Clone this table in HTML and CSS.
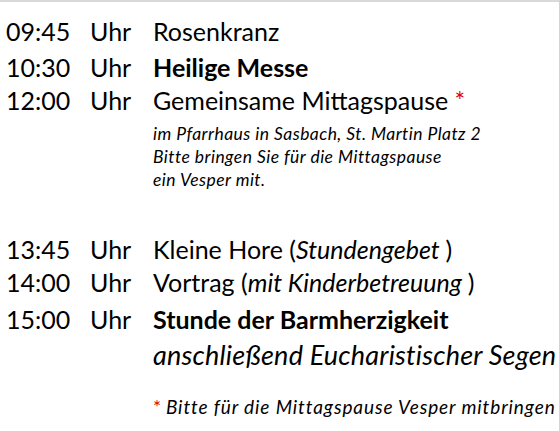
FILE: index.html
```html
<!DOCTYPE html>
<html lang="de">
<head>
<meta charset="utf-8">
<title>Programm</title>
<link rel="stylesheet" href="styles.css">
</head>
<body>
<main class="sched">
  <div class="row r1"><span class="time">09:45</span><span class="uhr">Uhr</span><span class="what">Rosenkranz</span></div>
  <div class="row r2"><span class="time">10:30</span><span class="uhr">Uhr</span><span class="what"><b>Heilige Messe</b></span></div>
  <div class="row r3"><span class="time">12:00</span><span class="uhr">Uhr</span><span class="what">Gemeinsame Mittagspause <span class="star">*</span></span></div>
  <div class="notes">
    <p>im Pfarrhaus in Sasbach, St. Martin Platz 2</p>
    <p>Bitte bringen Sie für die Mittagspause</p>
    <p>ein Vesper mit.</p>
  </div>
  <div class="row r4"><span class="time">13:45</span><span class="uhr">Uhr</span><span class="what">Kleine Hore (<i>Stundengebet </i>)</span></div>
  <div class="row r5"><span class="time">14:00</span><span class="uhr">Uhr</span><span class="what">Vortrag (<i>mit Kinderbetreuung </i>)</span></div>
  <div class="row r6"><span class="time">15:00</span><span class="uhr">Uhr</span><span class="what"><b>Stunde der Barmherzigkeit</b></span></div>
  <div class="row r7"><span class="time"></span><span class="uhr"></span><span class="what big-italic">anschließend Eucharistischer Segen</span></div>
  <div class="footnote"><span class="star">*</span> <i>Bitte für die Mittagspause Vesper mitbringen</i></div>
</main>
</body>
</html>
```

FILE: styles.css
```css
html, body {
  margin: 0;
  padding: 0;
  background: #ffffff;
}
body {
  border-top: 2px solid #d9d9d9;
  font-family: Lato, "Open Sans", sans-serif;
  color: #000000;
}
.sched {
  padding: 12px 0 0 6px;
}
.row {
  display: grid;
  grid-template-columns: 84px 63px 1fr;
  font-size: 25px;
  line-height: 34px;
  white-space: nowrap;
}
.r2 { margin-top: 2px; }
.r3 { margin-top: -1px; }
.r4 { margin-top: 41px; line-height: 35px; }
.r5 { margin-top: -2px; line-height: 35px; }
.r6 { margin-top: 2px; line-height: 35px; }
.r7 { line-height: 35px; }
.big-italic {
  font-style: italic;
  font-size: 27px;
  letter-spacing: 0.2px;
}
.star { color: #e00000; }
.notes {
  padding-left: 147px;
  margin-top: 5px;
  font-size: 17.5px;
  line-height: 23px;
  font-style: italic;
  letter-spacing: 0.45px;
  white-space: nowrap;
}
.notes p { margin: 0; }
.footnote {
  padding-left: 147px;
  margin-top: 23px;
  font-size: 19px;
  line-height: 24px;
  white-space: nowrap;
}
.footnote i { letter-spacing: 0.9px; }
```
